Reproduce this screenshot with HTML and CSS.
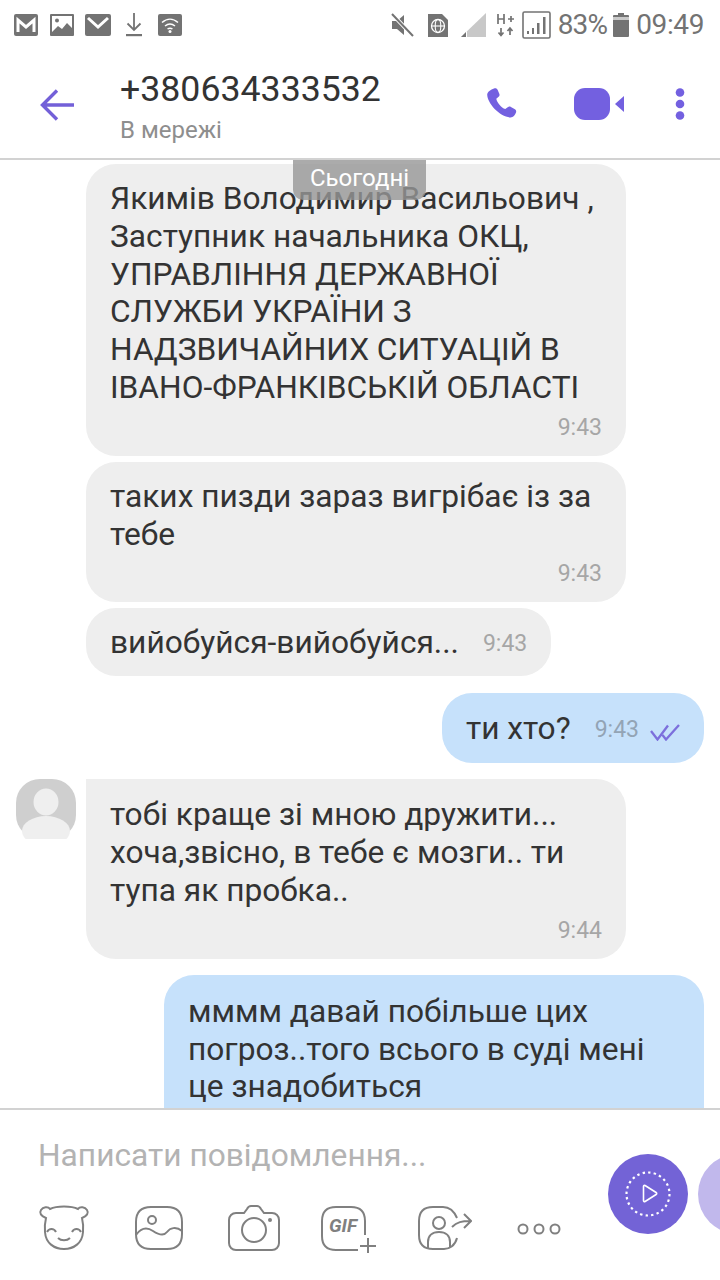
FILE: index.html
```html
<!DOCTYPE html>
<html lang="uk">
<head>
<meta charset="utf-8">
<title>Viber</title>
<link rel="stylesheet" href="styles.css">
</head>
<body>
<div class="app">
  <div class="status">
    <div class="status-left">
      <svg width="24" height="22" viewBox="0 0 24 22"><rect x="0" y="0" width="24" height="22" rx="2" fill="#737373"/><path d="M4 18V6l8 7 8-7v12" fill="none" stroke="#fff" stroke-width="3"/></svg>
      <svg class="photo" width="24" height="22" viewBox="0 0 24 22"><rect width="24" height="22" rx="1" fill="#737373"/><rect x="2" y="2" width="20" height="16" fill="#fff"/><circle cx="7" cy="6.5" r="2" fill="#737373"/><path d="M2 18l6-6 4 3 5-6 5 5v4z" fill="#737373"/></svg>
      <svg width="26" height="22" viewBox="0 0 26 22"><rect width="26" height="22" rx="2" fill="#737373"/><path d="M3 4l10 9 10-9" fill="none" stroke="#fff" stroke-width="3"/></svg>
      <svg class="dl" width="16" height="24" viewBox="0 0 16 24"><path d="M8 0v17M1.500 10.500l6.500 6.500 6.500-6.500" fill="none" stroke="#737373" stroke-width="1.800"/><rect x="0" y="21" width="16" height="2.200" fill="#737373"/></svg>
      <svg class="wifi" width="24" height="22" viewBox="0 0 24 22"><rect width="24" height="22" rx="2" fill="#737373"/><path d="M4 8.500c5-4.500 11-4.500 16 0M7 12c3-2.500 7-2.500 10 0M9.500 15c1.500-1 3.500-1 5 0" fill="none" stroke="#fff" stroke-width="1.500"/><circle cx="12" cy="17.500" r="1.500" fill="#fff"/></svg>
    </div>
    <div class="status-right">
      <svg class="mute" width="23" height="24" viewBox="0 0 23 24"><path d="M1 8h5l7-6v20l-7-6H1z" fill="#737373"/><path d="M1 1l21 22" stroke="#fff" stroke-width="4"/><path d="M1 1l21 22" stroke="#737373" stroke-width="2"/></svg>
      <svg class="sim" width="20" height="23" viewBox="0 0 20 23"><path d="M0 0h14l6 6v17H0z" fill="#737373"/><circle cx="10" cy="12" r="6.500" fill="none" stroke="#fff" stroke-width="1.300"/><ellipse cx="10" cy="12" rx="2.800" ry="6.500" fill="none" stroke="#fff" stroke-width="1.100"/><path d="M3.500 12h13" stroke="#fff" stroke-width="1.100"/></svg>
      <svg class="sig" width="25" height="24" viewBox="0 0 25 24"><path d="M25 0v24H0z" fill="#c8c8c8"/><path d="M6 18v6H0z" fill="#fff"/><path d="M5 19v5H0z" fill="#737373"/></svg>
      <svg class="net" width="18" height="24" viewBox="0 0 18 24"><path d="M1 1v10M7 1v10M1 6h6M11 6h6M14 3v6" stroke="#737373" stroke-width="1.700" fill="none"/><path d="M4 15v7M1.500 19.500L4 22.500l2.500-3M13 22v-7M10.500 18l2.500-3 2.500 3" stroke="#737373" stroke-width="1.700" fill="none"/></svg>
      <svg class="box" width="29" height="28" viewBox="0 0 29 28"><rect x="1" y="1" width="27" height="26" rx="1.500" fill="none" stroke="#737373" stroke-width="1.600"/><path d="M5 23h2v-3H5zM10 23h2v-6h-2zM15 23h2.500V12H15zM21 23h2.500V6H21z" fill="#737373"/></svg>
      <span class="pct">83%</span>
      <svg class="batt" width="16" height="24" viewBox="0 0 16 24"><path d="M5 0h6v2h4a1 1 0 0 1 1 1v20a1 1 0 0 1-1 1H1a1 1 0 0 1-1-1V3a1 1 0 0 1 1-1h4z" fill="#737373"/><rect y="4" width="16" height="3" fill="#c9c9c9"/></svg>
      <span class="clock">09:49</span>
    </div>
  </div>

  <header class="header">
    <svg class="back" width="34" height="32" viewBox="0 0 34 32"><path d="M17 1.500L2.500 16 17 30.500M3 16h31" fill="none" stroke="#7360d8" stroke-width="3.400"/></svg>
    <div class="title">
      <div class="phone">+380634333532</div>
      <div class="presence">В мережі</div>
    </div>
    <div class="actions">
      <svg width="32" height="32" viewBox="0 0 32 32"><path d="M8 .5c1.700-.7 3 0 3.600 1.300l1.700 4c.5 1.200.2 2.300-.7 3l-2.300 2c.6 3.800 5 9 9 10.300l2.400-1.900c1-.8 2.100-.9 3.200-.3l3.600 2c1.500.8 2 2.100 1.500 3.500-.8 2.500-2.800 5-5.400 5C14 29.400 1.200 15.300 1.200 6.600 1.200 4 4.800 1.700 8 .5z" fill="#7360e0"/></svg>
      <svg class="cam" width="50" height="32" viewBox="0 0 50 32"><rect x="0" y="0" width="36" height="32" rx="11" fill="#7360e0"/><path d="M50 8v16l-9-8z" fill="#7360e0"/></svg>
      <svg class="more" width="10" height="32" viewBox="0 0 10 32"><circle cx="5" cy="4.500" r="4.300" fill="#7360e0"/><circle cx="5" cy="16" r="4.300" fill="#7360e0"/><circle cx="5" cy="27.500" r="4.300" fill="#7360e0"/></svg>
    </div>
  </header>

  <main class="chat">
    <div class="date">Сьогодні</div>

    <div class="row in">
      <div class="bubble wide">
        <p>Якимів Володимир Васильович , Заступник начальника ОКЦ, УПРАВЛІННЯ ДЕРЖАВНОЇ СЛУЖБИ УКРАЇНИ З НАДЗВИЧАЙНИХ СИТУАЦІЙ В ІВАНО-ФРАНКІВСЬКІЙ ОБЛАСТІ</p>
        <div class="time">9:43</div>
      </div>
    </div>
    <div class="row in">
      <div class="bubble wide">
        <p>таких пизди зараз вигрібає із за тебе</p>
        <div class="time">9:43</div>
      </div>
    </div>
    <div class="row in">
      <div class="bubble inline">
        <p>вийобуйся-вийобуйся...</p>
        <span class="time">9:43</span>
      </div>
    </div>
    <div class="row out gap-wide">
      <div class="bubble inline blue">
        <p>ти хто?</p>
        <span class="time">9:43</span>
        <svg class="ticks" width="30" height="18" viewBox="0 0 30 18"><path d="M1 8l6.500 8.500L18 2.500M12.500 12l3.500 4.500L29 2" fill="none" stroke="#7c6fdc" stroke-width="2.300"/></svg>
      </div>
    </div>
    <div class="row in gap">
      <div class="avatar">
        <svg width="60" height="60" viewBox="0 0 60 60"><rect width="60" height="60" rx="24" fill="#cfcfcf"/><ellipse cx="30" cy="23" rx="12.500" ry="13.500" fill="#efefef"/><ellipse cx="30" cy="52" rx="24" ry="15" fill="#efefef"/></svg>
      </div>
      <div class="bubble wide first">
        <p>тобі краще зі мною дружити... хоча,звісно, в тебе є мозги.. ти тупа як пробка..</p>
        <div class="time">9:44</div>
      </div>
    </div>
    <div class="row out gap">
      <div class="bubble wide blue">
        <p>мммм давай побільше цих погроз..того всього в суді мені це знадобиться</p>
      </div>
    </div>
  </main>

  <footer class="composer">
    <div class="composer-main">
      <div class="placeholder">Написати повідомлення...</div>
      <div class="tools">
        <svg width="52" height="46" viewBox="0 0 52 46"><g fill="none" stroke="#808080" stroke-width="2"><path d="M8 13C3 11 1 8 3 5c2-3 7-4 9-1 3-1.500 6-2.500 14-2.500S37 2.500 40 4c2-3 7-2 9 1s0 6-5 8c1 4 1.500 8 1 14-.7 11-9 17-19 17S7.700 38 7 27c-.5-6 0-10 1-14z"/><path d="M9 27c2-4 7-4 9 0M34 27c2-4 7-4 9 0M20 33c3 3 9 3 12 0"/></g></svg>
        <svg width="48" height="44" viewBox="0 0 48 44"><g fill="none" stroke="#808080" stroke-width="2"><path d="M16 1h16c10 0 15 5 15 15v12c0 10-5 15-15 15H16C6 43 1 38 1 28V16C1 6 6 1 16 1z"/><circle cx="17" cy="14" r="4"/><path d="M1 29c5-7 11-8 17-4s11 5 14 1 9-6 15-1"/></g></svg>
        <svg width="52" height="46" viewBox="0 0 52 46"><g fill="none" stroke="#808080" stroke-width="2"><path d="M8 8h8l3-4c1-2 2-3 4-3h6c2 0 3 1 4 3l3 4h8c4 0 7 3 7 7v23c0 4-3 7-7 7H8c-4 0-7-3-7-7V15c0-4 3-7 7-7z"/><circle cx="26" cy="25" r="12"/></g><circle cx="42" cy="15" r="2" fill="#808080"/></svg>
        <div class="gif">
          <svg width="56" height="48" viewBox="0 0 56 48"><path d="M37 44H15C6 44 1 39 1 30V15C1 6 6 1 15 1h15c9 0 14 5 14 14v14" fill="none" stroke="#808080" stroke-width="2"/><path d="M47 32v15M39 40h16" stroke="#808080" stroke-width="2"/></svg>
          <span class="gif-label">GIF</span>
        </div>
        <svg width="54" height="44" viewBox="0 0 54 44"><g fill="none" stroke="#808080" stroke-width="2"><path d="M39 12C36 5 31 1 25 1H15C6 1 1 6 1 15v14c0 9 5 14 14 14h11c5 0 11-3 13-11"/><circle cx="21" cy="17" r="6"/><path d="M10 42v-6c0-6 4-10 11-10s11 4 11 10v6"/><path d="M34 21c5-5 10-6 18-6M46 8l7 7-7 7"/></g></svg>
        <svg class="dots" width="44" height="12" viewBox="0 0 44 12"><g fill="none" stroke="#808080" stroke-width="2"><circle cx="6" cy="6" r="4.500"/><circle cx="22" cy="6" r="4.500"/><circle cx="38" cy="6" r="4.500"/></g></svg>
      </div>
    </div>
    <div class="buttons">
      <div class="round primary">
        <svg width="48" height="48" viewBox="0 0 48 48"><circle cx="24" cy="24" r="21.500" fill="none" stroke="#fff" stroke-width="2.200" stroke-dasharray="2.400 3.200"/><path d="M19.500 16.500c0-1 .8-1.400 1.600-1l11 7c.8.600.8 1.500 0 2l-11 7c-.8.400-1.600 0-1.600-1z" fill="none" stroke="#fff" stroke-width="1.600"/></svg>
      </div>
      <div class="round secondary"></div>
    </div>
  </footer>
</div>
</body>
</html>
```
FILE: styles.css
```css
* { box-sizing: border-box; }
html, body { margin: 0; padding: 0; background: #fff; }
body { font-family: Roboto, "Noto Sans", sans-serif; }
svg { display: block; flex: none; }

.app {
  width: 720px;
  height: 1280px;
  display: flex;
  flex-direction: column;
  overflow: hidden;
}

.status {
  height: 52px;
  padding: 11px 16px 0 14px;
  display: flex;
  justify-content: space-between;
  align-items: flex-start;
  color: #737373;
}
.status-left { display: flex; gap: 11px; align-items: center; padding-top: 2px; }
.status-left .photo { margin-left: 1px; }
.status-left .dl { margin-left: 4px; }
.status-left .wifi { margin-left: 5px; }
.status-right { display: flex; align-items: center; }
.status-right .sim { margin-left: 14px; }
.status-right .sig { margin-left: 13px; }
.status-right .net { margin-left: 11px; }
.status-right .box { margin-left: 7px; }
.pct, .clock { font-size: 28px; line-height: 28px; }
.status-right .pct { margin-left: 7px; letter-spacing: -.8px; }
.status-right .batt { margin-left: 6px; }
.status-right .clock { margin-left: 7px; letter-spacing: -.4px; }

.header {
  height: 108px;
  padding: 0 35px 0 40px;
  border-bottom: 2px solid #d2d2d2;
  display: flex;
  align-items: flex-start;
}
.back { margin-top: 37px; }
.title { margin-left: 46px; margin-top: 17px; flex: 1; }
.phone { font-size: 35.700px; line-height: 40px; color: #333; }
.presence { font-size: 24px; line-height: 28px; margin-top: 7px; color: #8e8e8e; }
.actions { display: flex; margin-top: 36px; }
.cam { margin-left: 56px; }
.more { margin-left: 51px; }

.chat {
  position: relative;
  height: 948px;
  padding-top: 4px;
  overflow: hidden;
  display: flex;
  flex-direction: column;
  gap: 6px;
}
.date {
  position: absolute;
  top: 0;
  left: 293px;
  width: 133px;
  height: 40px;
  background: rgba(150, 150, 150, .8);
  border-radius: 0 0 10px 10px;
  color: #fff;
  font-size: 24px;
  line-height: 36px;
  text-align: center;
  z-index: 1;
}
.row { display: flex; flex: none; }
.row.in { padding-left: 86px; position: relative; }
.row.out { justify-content: flex-end; padding-right: 16px; }
.row.gap { margin-top: 10px; }
.row.gap-wide { margin-top: 11px; }

.avatar { position: absolute; left: 16px; top: 0; }

.bubble {
  background: #eeeeee;
  border-radius: 30px;
  color: #333;
  font-size: 31.700px;
  line-height: 37.800px;
}
.bubble p { margin: 0; }
.bubble.wide { width: 540px; padding: 16px 24px 13px 24px; }
.bubble.wide.first { border-top-left-radius: 0; padding-top: 17px; padding-bottom: 13px; }
.bubble.wide.blue { background: #c6e1fb; padding-top: 18px; padding-bottom: 60px; }
.bubble.inline {
  display: flex;
  align-items: center;
  height: 68px;
  padding: 2px 24px 0 24px;
}
.bubble.inline.blue { background: #c6e1fb; height: 70px; padding: 2px 24px 0; }
.time { font-size: 23px; line-height: 30px; color: #a6a6a6; text-align: right; margin-top: 6px; }
span.time { margin: 2px 0 0 24px; }
.blue .time { color: #93a4b5; }
.ticks { margin-left: 11px; margin-top: 5px; }

.composer {
  height: 172px;
  border-top: 2px solid #d2d2d2;
  position: relative;
  background: #fff;
  display: flex;
  justify-content: space-between;
}
.composer-main { padding-left: 38px; }
.placeholder { font-size: 31.700px; line-height: 36px; margin-top: 28px; color: #b3b3b3; }
.tools { display: flex; align-items: center; gap: 45px; margin-top: 28px; }
.gif { position: relative; width: 52px; height: 48px; margin-top: 4px; margin-left: -4px; }
.gif-label {
  position: absolute;
  left: 8px;
  top: 8px;
  font-size: 19px;
  line-height: 24px;
  font-weight: 700;
  font-style: italic;
  color: #808080;
}
.dots { margin-top: 2px; }

.buttons { display: flex; gap: 10px; margin-top: 44px; margin-right: -58px; }
.round { width: 80px; height: 80px; border-radius: 50%; display: flex; align-items: center; justify-content: center; }
.primary { background: #7363d6; }
.secondary { background: #c1b8ec; }
```
